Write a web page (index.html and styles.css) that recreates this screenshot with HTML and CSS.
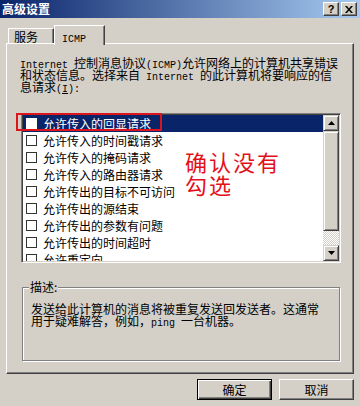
FILE: index.html
```html
<!DOCTYPE html>
<html lang="zh-CN">
<head>
<meta charset="utf-8">
<title>高级设置</title>
<link rel="stylesheet" href="styles.css">
</head>
<body>
<div class="window">
  <div class="titlebar">
    <span class="title">高级设置</span>
    <div class="tb-btns">
      <span class="tb-btn help">?</span>
      <span class="tb-btn"><svg width="8" height="7" viewBox="0 0 8 7"><path d="M0 0h2l2 2.5L6 0h2L5 3.5 8 7H6L4 4.5 2 7H0l3-3.5z"/></svg></span>
    </div>
  </div>
  <div class="content">
    <div class="tabs">
      <div class="tab">服务</div>
      <div class="tab active"><span class="en">ICMP</span></div>
    </div>
    <div class="panel">
      <div class="intro">
        <div class="line"><span class="en">Internet </span>控制消息协议<span class="en">(ICMP)</span>允许网络上的计算机共享错误</div>
        <div class="line">和状态信息。选择来自<span class="en"> Internet </span>的此计算机将要响应的信</div>
        <div class="line">息请求<span class="en">(<u>I</u>):</span></div>
      </div>
      <div class="listbox">
        <div class="list">
          <div class="row selected"><span class="check"></span><span>允许传入的回显请求</span></div>
          <div class="row"><span class="check"></span><span>允许传入的时间戳请求</span></div>
          <div class="row"><span class="check"></span><span>允许传入的掩码请求</span></div>
          <div class="row"><span class="check"></span><span>允许传入的路由器请求</span></div>
          <div class="row"><span class="check"></span><span>允许传出的目标不可访问</span></div>
          <div class="row"><span class="check"></span><span>允许传出的源结束</span></div>
          <div class="row"><span class="check"></span><span>允许传出的参数有问题</span></div>
          <div class="row"><span class="check"></span><span>允许传出的时间超时</span></div>
          <div class="row"><span class="check"></span><span>允许重定向</span></div>
        </div>
        <div class="scrollbar">
          <div class="sb-btn"><svg width="7" height="4" viewBox="0 0 7 4"><path d="M3.5 0L7 4H0z"/></svg></div>
          <div class="sb-thumb"></div>
          <div class="sb-track"></div>
          <div class="sb-btn"><svg width="7" height="4" viewBox="0 0 7 4"><path d="M0 0h7L3.5 4z"/></svg></div>
        </div>
        <div class="red-box"></div>
        <div class="note">确认没有<br>勾选</div>
      </div>
      <div class="group">
        <div class="group-label">描述:</div>
        <div class="group-text">
          <div class="line">发送给此计算机的消息将被重复发送回发送者。这通常</div>
          <div class="line">用于疑难解答，例如，<span class="en">ping </span>一台机器。</div>
        </div>
      </div>
    </div>
    <div class="buttons">
      <div class="btn default">确定</div>
      <div class="btn">取消</div>
    </div>
  </div>
</div>
</body>
</html>
```

FILE: styles.css
```css
* { box-sizing: border-box; }

body {
  margin: 0;
  background: #d4d0c8;
  font: 12px/12px "Noto Sans CJK SC", sans-serif;
  color: #000;
}

.en {
  font-family: "Liberation Mono", monospace;
  font-size: 10px;
}

.window {
  width: 360px;
  height: 406px;
  display: flex;
  flex-direction: column;
  overflow: hidden;
}

.titlebar {
  height: 18px;
  flex: none;
  background: linear-gradient(to right, #0a246a, #a6caf0);
  display: flex;
  align-items: center;
  justify-content: space-between;
  padding: 0 3px 0 2px;
}

.title {
  color: #fff;
  font-weight: 700;
  font-size: 12px;
  line-height: 14px;
}

.tb-btns { display: flex; gap: 2px; }

.tb-btn {
  width: 16px;
  height: 14px;
  background: #d4d0c8;
  border: 1px solid;
  border-color: #fff #404040 #404040 #fff;
  box-shadow: inset -1px -1px #808080;
  display: flex;
  align-items: center;
  justify-content: center;
  font: bold 11px/1 "Liberation Sans", sans-serif;
}

.content {
  flex: 1;
  display: flex;
  flex-direction: column;
  padding: 7px 6px 0 6px;
}

.tabs {
  height: 18px;
  display: flex;
  align-items: flex-end;
  padding-left: 2px;
  position: relative;
  z-index: 1;
}

.tab {
  width: 46px;
  height: 15px;
  border: 1px solid;
  border-bottom: none;
  border-color: #fff #404040 transparent #fff;
  box-shadow: inset -1px 0 #808080;
  padding: 2px 0 0 5px;
  background: #d4d0c8;
}

.tab.active {
  width: 51px;
  height: 20px;
  margin-bottom: -2px;
  padding: 5px 0 0 7px;
}

.panel {
  height: 331px;
  border: 1px solid;
  border-color: #fff #404040 #404040 #fff;
  box-shadow: inset -1px -1px #808080;
  padding: 13px 0 0 13px;
}

.line { white-space: nowrap; height: 12px; }

.listbox {
  position: relative;
  margin: 20px 0 0 1px;
  width: 320px;
  height: 150px;
  background: #fff;
  border: 1px solid;
  border-color: #808080 #fff #fff #808080;
  box-shadow: inset 1px 1px #404040, inset -1px -1px #d4d0c8;
  padding: 1px;
  display: flex;
}

.list {
  flex: 1;
  overflow: hidden;
}

.row {
  height: 17px;
  display: flex;
  align-items: center;
  gap: 6px;
  padding-left: 3px;
  white-space: nowrap;
}

.check {
  width: 11px;
  height: 11px;
  flex: none;
  background: #fff;
  border: 1px solid #333;
}

.row.selected {
  background: #0a246a;
  color: #fff;
}

.row.selected .check { border-color: #fff; }

.scrollbar {
  width: 16px;
  flex: none;
  display: flex;
  flex-direction: column;
}

.sb-btn, .sb-thumb {
  background: #d4d0c8;
  border: 1px solid;
  border-color: #d4d0c8 #404040 #404040 #d4d0c8;
  box-shadow: inset 1px 1px #fff, inset -1px -1px #808080;
}

.sb-btn {
  height: 16px;
  display: flex;
  align-items: center;
  justify-content: center;
}

.sb-thumb { height: 100px; }

.sb-track {
  height: 14px;
  background: repeating-conic-gradient(#d4d0c8 0 25%, #fff 0 50%) 0 0 / 2px 2px;
}

.red-box {
  position: absolute;
  left: -6px;
  top: -1px;
  width: 146px;
  height: 18px;
  border: 2px solid #dc141e;
}

.note {
  position: absolute;
  left: 163px;
  top: 36px;
  color: #e3101a;
  font-size: 22px;
  line-height: 23px;
  letter-spacing: 2px;
  white-space: nowrap;
}

.group {
  margin: 24px 0 0 2px;
  width: 318px;
  height: 74px;
  border: 1px solid #808080;
  box-shadow: inset 1px 1px #fff, 1px 1px #fff;
}

.group-label {
  width: fit-content;
  margin: -7px 0 0 6px;
  padding: 0 1px;
  background: #d4d0c8;
  line-height: 12px;
}

.group-text {
  margin: 10px 0 0 8px;
}

.buttons {
  margin-top: 5px;
  display: flex;
  justify-content: flex-end;
  gap: 7px;
}

.btn {
  width: 75px;
  height: 21px;
  display: flex;
  align-items: center;
  justify-content: center;
  background: #d4d0c8;
  border: 1px solid;
  border-color: #fff #404040 #404040 #fff;
  box-shadow: inset -1px -1px #808080;
}

.btn.default {
  border: 1px solid #000;
  box-shadow: inset 1px 1px #fff, inset -1px -1px #404040, inset -2px -2px #808080;
}
```
